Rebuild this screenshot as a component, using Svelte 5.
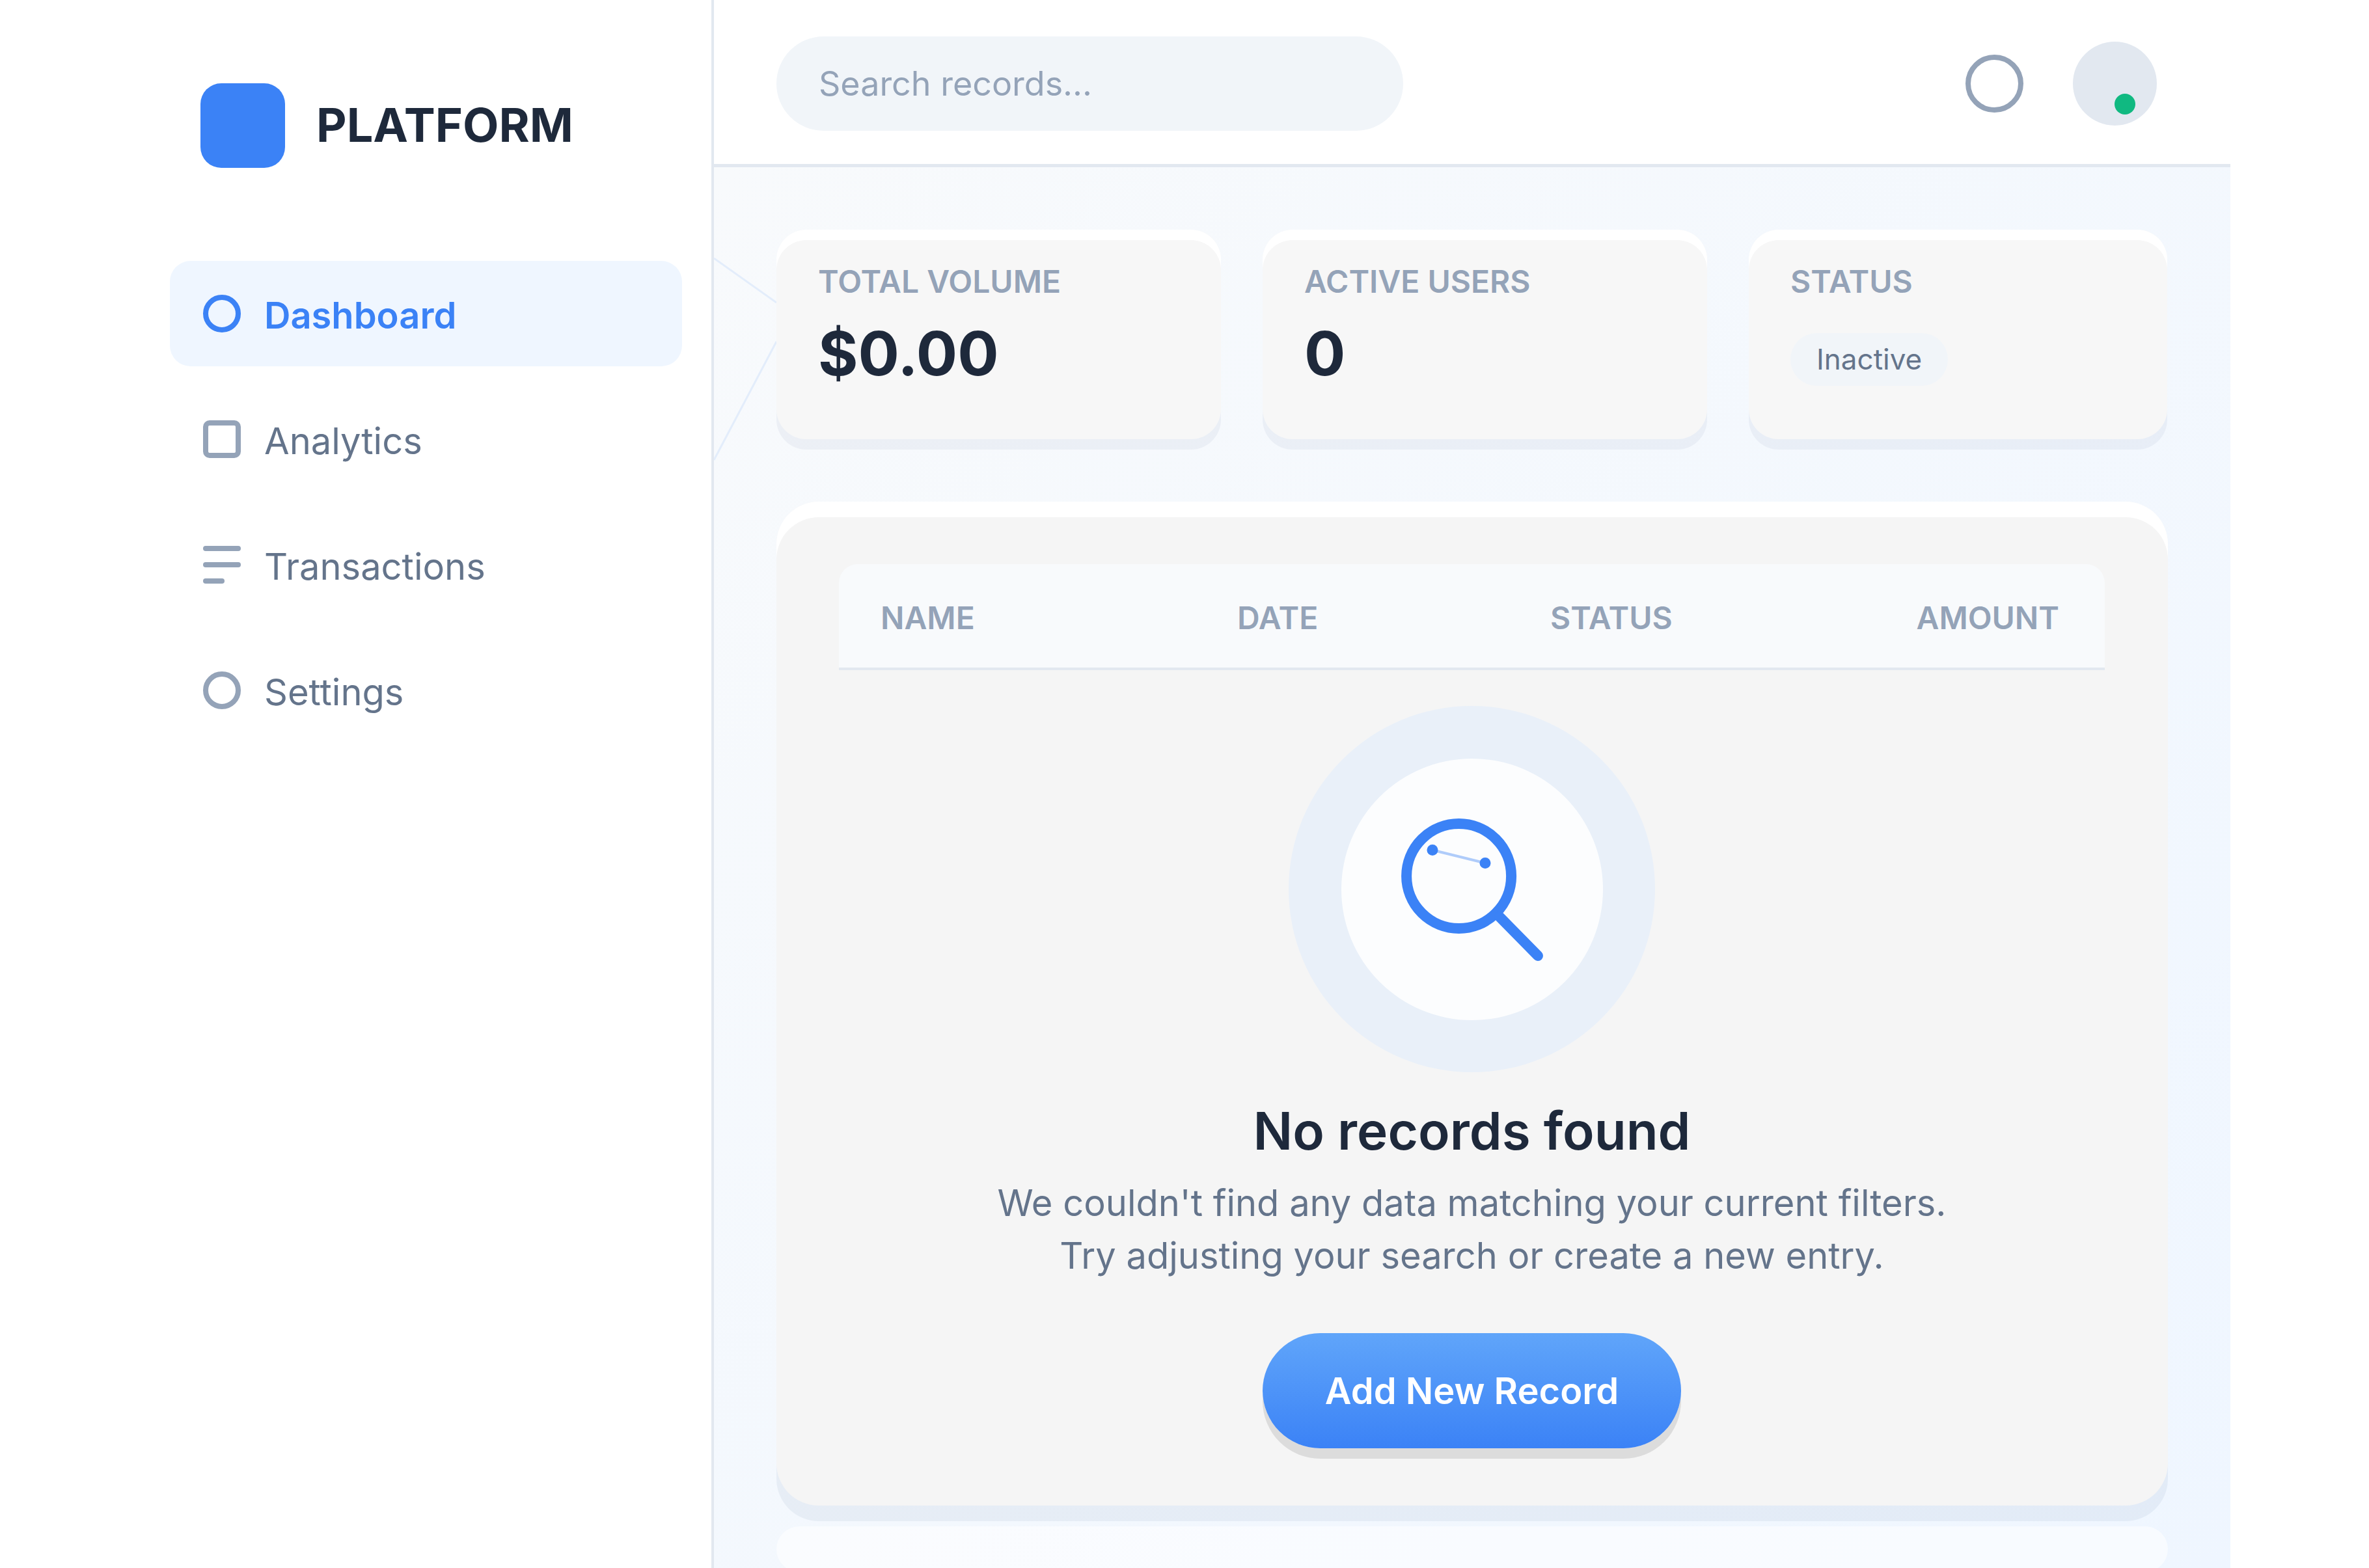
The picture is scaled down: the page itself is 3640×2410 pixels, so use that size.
<script>
    const navItems = [
        { label: 'Dashboard', icon: 'ring', active: true },
        { label: 'Analytics', icon: 'square' },
        { label: 'Transactions', icon: 'bars' },
        { label: 'Settings', icon: 'ring' }
    ];

    const stats = [
        { label: 'TOTAL VOLUME', value: '$0.00' },
        { label: 'ACTIVE USERS', value: '0' },
        { label: 'STATUS', badge: 'Inactive' }
    ];

    const columns = ['NAME', 'DATE', 'STATUS', 'AMOUNT'];
</script>

<div class="app">
    <aside class="sidebar">
        <div class="brand">
            <div class="logo"></div>
            <span class="brand-name">PLATFORM</span>
        </div>
        <nav class="nav">
            {#each navItems as item}
                <div class="nav-item" class:active={item.active}>
                    {#if item.icon === 'bars'}
                        <span class="icon bars"><i></i><i></i><i></i></span>
                    {:else}
                        <span class="icon {item.icon}"></span>
                    {/if}
                    <span class="nav-label">{item.label}</span>
                </div>
            {/each}
        </nav>
    </aside>

    <div class="main">
        <header class="topbar">
            <div class="search">Search records...</div>
            <div class="top-actions">
                <span class="bell"></span>
                <span class="avatar"><span class="online"></span></span>
            </div>
        </header>

        <div class="content">
            <svg class="bg-lines" width="96" height="460" viewBox="0 0 96 460">
                <line x1="0" y1="140" x2="96" y2="208" />
                <line x1="0" y1="450" x2="96" y2="268" />
            </svg>

            <section class="stats">
                {#each stats as stat}
                    <div class="stat-card">
                        <div class="stat-label">{stat.label}</div>
                        {#if stat.badge}
                            <span class="badge">{stat.badge}</span>
                        {:else}
                            <div class="stat-value">{stat.value}</div>
                        {/if}
                    </div>
                {/each}
            </section>

            <section class="panel">
                <div class="table-head">
                    {#each columns as col}
                        <span>{col}</span>
                    {/each}
                </div>

                <div class="empty">
                    <div class="halo">
                        <div class="disc">
                            <svg width="402" height="402" viewBox="0 0 402 402" fill="none">
                                <circle cx="180.6" cy="180.5" r="80.5" stroke="#3b82f6" stroke-width="16" />
                                <line x1="243" y1="243" x2="302" y2="303" stroke="#3b82f6" stroke-width="16" stroke-linecap="round" />
                                <line x1="140" y1="140.5" x2="221" y2="160.5" stroke="#3b82f6" stroke-opacity="0.4" stroke-width="4" />
                                <circle cx="140" cy="140.5" r="8.5" fill="#3b82f6" />
                                <circle cx="221" cy="160.5" r="8.5" fill="#3b82f6" />
                            </svg>
                        </div>
                    </div>
                    <h2>No records found</h2>
                    <p>We couldn't find any data matching your current filters.<br>Try adjusting your search or create a new entry.</p>
                    <button>Add New Record</button>
                </div>
            </section>

            <div class="pager"></div>
        </div>
    </div>
</div>

<style>
    :global(body) {
        background: #fff;
        font-family: Inter, "Liberation Sans", sans-serif;
    }

    .app {
        display: flex;
        width: 3427px;
        height: 2410px;
        overflow: hidden;
    }

    .sidebar {
        width: 1097px;
        flex: none;
        box-sizing: border-box;
        border-right: 4px solid #e2e8f0;
        background: #fff;
        padding: 128px 45px 0 261px;
    }

    .brand {
        display: flex;
        align-items: center;
        gap: 48px;
        margin-left: 47px;
        margin-bottom: 143px;
    }

    .logo {
        width: 130px;
        height: 130px;
        border-radius: 32px;
        background: #3b82f6;
    }

    .brand-name {
        font-size: 72px;
        font-weight: 700;
        color: #1e293b;
        padding-bottom: 4px;
    }

    .nav {
        display: flex;
        flex-direction: column;
        gap: 31px;
    }

    .nav-item {
        display: flex;
        align-items: center;
        gap: 36px;
        height: 162px;
        padding-left: 51px;
        border-radius: 32px;
        font-size: 56px;
        font-weight: 400;
        color: #64748b;
    }

    .nav-label {
        padding-top: 5px;
    }

    .nav-item.active {
        background: #eff6ff;
        color: #3b82f6;
        font-weight: 600;
    }

    .icon {
        width: 58px;
        height: 58px;
        box-sizing: border-box;
        flex: none;
    }

    .ring {
        border: 8px solid #94a3b8;
        border-radius: 50%;
    }

    .active .ring {
        border-color: #3b82f6;
    }

    .square {
        border: 8px solid #94a3b8;
        border-radius: 10px;
    }

    .bars {
        display: flex;
        flex-direction: column;
        justify-content: space-between;
    }

    .bars i {
        display: block;
        height: 8px;
        border-radius: 4px;
        background: #94a3b8;
    }

    .bars i:nth-child(3) {
        width: 33px;
    }

    .main {
        flex: 1;
        min-width: 0;
        display: flex;
        flex-direction: column;
    }

    .topbar {
        height: 257px;
        flex: none;
        box-sizing: border-box;
        display: flex;
        align-items: center;
        justify-content: space-between;
        padding: 4px 113px 0 96px;
        background: #fff;
        border-bottom: 5px solid #e2e8f0;
    }

    .search {
        width: 963px;
        height: 145px;
        box-sizing: border-box;
        display: flex;
        align-items: center;
        padding-left: 65px;
        border-radius: 73px;
        background: #f1f5f9;
        color: #94a3b8;
        font-size: 52px;
    }

    .top-actions {
        display: flex;
        align-items: center;
        gap: 76px;
    }

    .bell {
        width: 89px;
        height: 89px;
        box-sizing: border-box;
        border: 8px solid #94a3b8;
        border-radius: 50%;
    }

    .avatar {
        position: relative;
        width: 129px;
        height: 129px;
        border-radius: 50%;
        background: #e2e8f0;
    }

    .online {
        position: absolute;
        left: 64px;
        top: 80px;
        width: 32px;
        height: 32px;
        border-radius: 50%;
        background: #10b981;
    }

    .content {
        position: relative;
        flex: 1;
        min-height: 0;
        overflow: hidden;
        padding: 96px;
        background: linear-gradient(135deg, #f8fafc, #eff6ff);
    }

    .bg-lines {
        position: absolute;
        left: 0;
        top: 0;
    }

    .bg-lines line {
        stroke: #e3edfb;
        stroke-width: 3;
    }

    .stats {
        position: relative;
        display: grid;
        grid-template-columns: 683px 683px 643px;
        gap: 64px;
        margin-bottom: 96px;
    }

    .stat-card {
        height: 322px;
        box-sizing: border-box;
        padding: 50px 64px 0;
        border-radius: 46px;
        background: #f7f7f7;
        box-shadow: inset 0 16px 0 #fff, 0 16px 0 rgba(30, 64, 120, 0.05);
    }

    .stat-label {
        font-size: 48px;
        font-weight: 600;
        color: #94a3b8;
    }

    .stat-value {
        font-size: 94px;
        font-weight: 700;
        color: #1e293b;
        margin-top: 24px;
    }

    .badge {
        display: inline-block;
        margin-top: 50px;
        height: 81px;
        line-height: 81px;
        padding: 0 40px;
        border-radius: 41px;
        background: #f1f5f9;
        color: #64748b;
        font-size: 44px;
    }

    .panel {
        position: relative;
        height: 1543px;
        box-sizing: border-box;
        padding: 96px 97px 0 96px;
        border-radius: 65px;
        background: #f5f5f5;
        box-shadow: inset 0 24px 0 #fff, 0 24px 0 rgba(30, 64, 120, 0.06);
    }

    .table-head {
        display: grid;
        grid-template-columns: 548px 481px 1fr auto;
        align-items: center;
        height: 163px;
        box-sizing: border-box;
        padding: 6px 70px 0 64px;
        border-radius: 29px 29px 0 0;
        border-bottom: 4px solid #e2e8f0;
        background: #f8fafc;
        font-size: 48px;
        font-weight: 600;
        color: #94a3b8;
    }

    .empty {
        display: flex;
        flex-direction: column;
        align-items: center;
        padding-top: 55px;
    }

    .halo {
        width: 563px;
        height: 563px;
        display: flex;
        align-items: center;
        justify-content: center;
        border-radius: 50%;
        background: #e9f0f9;
    }

    .disc {
        width: 402px;
        height: 402px;
        border-radius: 50%;
        background: #fcfdfe;
    }

    .disc svg {
        display: block;
    }

    h2 {
        margin: 41px 0 0;
        font-size: 80px;
        font-weight: 600;
        color: #1e293b;
    }

    p {
        margin: 23px 0 0;
        text-align: center;
        font-size: 56px;
        line-height: 81px;
        color: #64748b;
    }

    button {
        margin-top: 78px;
        width: 643px;
        height: 177px;
        border: none;
        border-radius: 89px;
        background: linear-gradient(180deg, #60a5fa, #3b82f6);
        box-shadow: 0 16px 0 rgba(0, 0, 0, 0.1);
        color: #fff;
        font-family: inherit;
        font-size: 56px;
        font-weight: 600;
    }

    .pager {
        position: relative;
        margin-top: 32px;
        height: 70px;
        border-radius: 36px;
        background: rgba(255, 255, 255, 0.55);
    }
</style>
